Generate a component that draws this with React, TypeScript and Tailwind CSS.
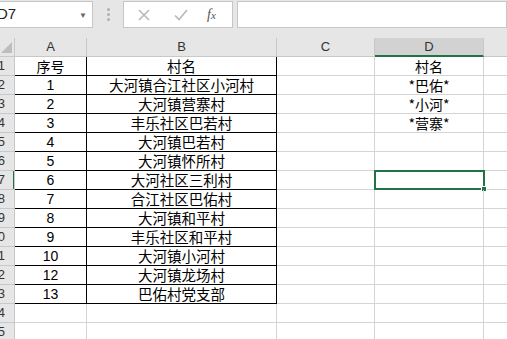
import React from "react";

const rows: [string, string][] = [
	["序号", "村名"],
	["1", "大河镇合江社区小河村"],
	["2", "大河镇营寨村"],
	["3", "丰乐社区巴若村"],
	["4", "大河镇巴若村"],
	["5", "大河镇怀所村"],
	["6", "大河社区三利村"],
	["7", "合江社区巴佑村"],
	["8", "大河镇和平村"],
	["9", "丰乐社区和平村"],
	["10", "大河镇小河村"],
	["12", "大河镇龙场村"],
	["13", "巴佑村党支部"],
];

const dCol = ["村名", "*巴佑*", "*小河*", "*营寨*"];

const cjk = "font-['Noto_Sans_CJK_SC',sans-serif]";
const latin = "font-['Liberation_Sans',sans-serif]";

// Row header: the sheet is scrolled a little, so the numbers are partly cut off on the left
const RowHead: React.FC<{ n: number; active?: boolean }> = ({ n, active }) => (
	<div className="w-[15px] h-[19px] shrink-0 overflow-hidden bg-[#e6e6e6] border-b border-r border-[#c8c8c8] relative">
		<div className={`absolute right-[9px] top-0 h-full flex items-center text-[13px] text-[#333] ${latin}`}>{n}</div>
		{active && <div className="absolute right-[-1px] top-0 w-[2px] h-full bg-[#217346]" />}
	</div>
);

export default function App() {
	return (
		<div className="w-[507px] h-[339px] overflow-hidden bg-white relative select-none">
			{/* formula bar */}
			<div className="h-[38px] bg-[#e6e6e6] flex items-start pt-[1px]">
				<div className="w-[101px] h-[27px] bg-white border border-[#c6c6c6] -ml-[8px] flex items-center pl-[4px] pr-[5px] shrink-0">
					<span className={`text-[15px] text-[#222] ${latin}`}>D7</span>
					<span className="ml-auto text-[#666] text-[8px]">▼</span>
				</div>
				<div className="w-[30px] h-[27px] flex flex-col items-center justify-center gap-[2px] shrink-0">
					<span className="w-[3px] h-[3px] rounded-full bg-[#b0b0b0]" />
					<span className="w-[3px] h-[3px] rounded-full bg-[#b0b0b0]" />
					<span className="w-[3px] h-[3px] rounded-full bg-[#b0b0b0]" />
				</div>
				<div className="w-[110px] h-[27px] bg-white border border-[#c6c6c6] flex items-center shrink-0">
					<svg width="14" height="14" viewBox="0 0 14 14" className="ml-[13px]">
						<path d="M2 2L12 12M12 2L2 12" stroke="#b8b8b8" strokeWidth="1.6" />
					</svg>
					<svg width="16" height="14" viewBox="0 0 16 14" className="ml-[22px]">
						<path d="M2 7.5L6 11.5L14 2" stroke="#b8b8b8" strokeWidth="1.6" fill="none" />
					</svg>
					<span className="ml-[18px] text-[14px] italic text-[#555] font-['Liberation_Serif',serif]">f<span className="text-[11px]">x</span></span>
				</div>
				<div className="flex-1 h-[27px] bg-white border border-[#c6c6c6] ml-[4px]" />
			</div>

			{/* column headers */}
			<div className={`flex h-[19px] bg-[#e6e6e6] text-[13px] text-[#333] ${latin}`}>
				<div className="w-[15px] border-r border-b border-[#c8c8c8] relative">
					<svg width="12" height="12" viewBox="0 0 12 12" className="absolute left-[1px] bottom-[2px]">
						<path d="M11 0L11 11L0 11Z" fill="#bdbdbd" />
					</svg>
				</div>
				<div className="w-[72px] border-r border-b border-[#c8c8c8] flex items-center justify-center">A</div>
				<div className="w-[190px] border-r border-b border-[#c8c8c8] flex items-center justify-center">B</div>
				<div className="w-[98px] border-r border-b border-[#c8c8c8] flex items-center justify-center">C</div>
				<div className="w-[109px] bg-[#d2d2d2] border-r border-[#c8c8c8] border-b-2 border-b-[#217346] flex items-center justify-center">D</div>
				<div className="flex-1 border-b border-[#c8c8c8]" />
			</div>

			{/* rows */}
			{Array.from({ length: 15 }).map((_, i) => {
				const data = rows[i];
				return (
					<div key={i} className="flex h-[19px]">
						<RowHead n={i + 1} active={i === 6} />
						{data ? (
							<>
								<div className={`w-[72px] h-[19px] shrink-0 flex items-center justify-center border-r border-b border-black text-[14px] text-black ${i === 0 ? cjk : latin}`}>
									{data[0]}
								</div>
								<div className={`w-[190px] h-[19px] shrink-0 flex items-center justify-center border-r border-b border-black text-[14.5px] leading-none text-black ${cjk}`}>
									{data[1]}
								</div>
							</>
						) : (
							<>
								<div className="w-[72px] h-[19px] shrink-0 border-r border-b border-[#d4d4d4]" />
								<div className="w-[190px] h-[19px] shrink-0 border-r border-b border-[#d4d4d4]" />
							</>
						)}
						<div className="w-[98px] h-[19px] shrink-0 border-r border-b border-[#d4d4d4]" />
						<div className={`w-[109px] h-[19px] shrink-0 border-r border-b border-[#d4d4d4] flex items-center justify-center text-[14px] leading-none text-black relative ${cjk}`}>
							{dCol[i] ?? ""}
							{i === 6 && (
								<div className="absolute -left-[1px] -top-[1px] w-[111px] h-[20px] border-2 border-[#217346]">
									<div className="absolute -right-[4px] -bottom-[4px] w-[6px] h-[6px] bg-[#217346] border border-white" />
								</div>
							)}
						</div>
						<div className="flex-1 h-[19px] border-b border-[#d4d4d4]" />
					</div>
				);
			})}
		</div>
	);
}
